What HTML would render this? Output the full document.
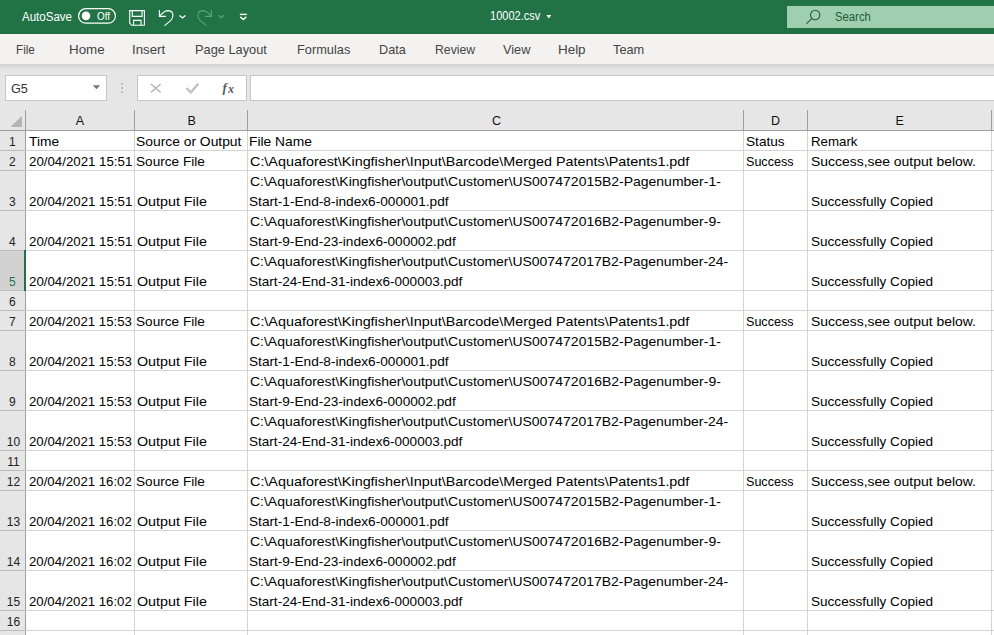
<!DOCTYPE html>
<html><head><meta charset="utf-8"><style>
html,body{margin:0;padding:0;}
body{width:994px;height:635px;overflow:hidden;position:relative;background:#fff;font-family:"Liberation Sans", sans-serif;}
.t{position:absolute;white-space:pre;line-height:normal;transform-origin:0 0;}
.abs{position:absolute;}
</style></head><body>
<div class="abs" style="left:0;top:0;width:994px;height:34px;background:#217346"></div>
<div class="abs" style="left:0;top:34px;width:994px;height:30px;background:#f3f2f1"></div>
<div class="abs" style="left:0;top:64px;width:994px;height:66px;background:#e6e6e6"></div>
<div class="abs" style="left:0;top:64px;width:994px;height:6px;background:linear-gradient(#d2d2d2,#e6e6e6)"></div>
<!-- search box -->
<div class="abs" style="left:787px;top:6px;width:210px;height:22px;background:#9fcfb0"></div>
<!-- name box -->
<div class="abs" style="left:5px;top:75px;width:100px;height:24px;background:#fff;border:1px solid #c6c6c6"></div>
<div class="abs" style="left:137px;top:75px;width:108px;height:24px;background:#fff;border:1px solid #c6c6c6"></div>
<div class="abs" style="left:250px;top:75px;width:760px;height:24px;background:#fff;border:1px solid #c6c6c6"></div>
<!-- row header column -->
<div class="abs" style="left:0;top:131px;width:25px;height:504px;background:#e6e6e6"></div>
<div class="abs" style="left:0;top:250px;width:25px;height:40px;background:#d2d2d2"></div>
<div class="abs" style="left:25px;top:110px;width:1px;height:525px;background:#9e9e9e"></div>
<div class="abs" style="left:0;top:130px;width:994px;height:1px;background:#9e9e9e"></div>
<div style="position:absolute;left:25px;top:150px;width:970px;height:1px;background:#d4d4d4"></div>
<div style="position:absolute;left:0;top:150px;width:25px;height:1px;background:#bcbcbc"></div>
<div style="position:absolute;left:25px;top:170px;width:970px;height:1px;background:#d4d4d4"></div>
<div style="position:absolute;left:0;top:170px;width:25px;height:1px;background:#bcbcbc"></div>
<div style="position:absolute;left:25px;top:210px;width:970px;height:1px;background:#d4d4d4"></div>
<div style="position:absolute;left:0;top:210px;width:25px;height:1px;background:#bcbcbc"></div>
<div style="position:absolute;left:25px;top:250px;width:970px;height:1px;background:#d4d4d4"></div>
<div style="position:absolute;left:0;top:250px;width:25px;height:1px;background:#bcbcbc"></div>
<div style="position:absolute;left:25px;top:290px;width:970px;height:1px;background:#d4d4d4"></div>
<div style="position:absolute;left:0;top:290px;width:25px;height:1px;background:#bcbcbc"></div>
<div style="position:absolute;left:25px;top:310px;width:970px;height:1px;background:#d4d4d4"></div>
<div style="position:absolute;left:0;top:310px;width:25px;height:1px;background:#bcbcbc"></div>
<div style="position:absolute;left:25px;top:330px;width:970px;height:1px;background:#d4d4d4"></div>
<div style="position:absolute;left:0;top:330px;width:25px;height:1px;background:#bcbcbc"></div>
<div style="position:absolute;left:25px;top:370px;width:970px;height:1px;background:#d4d4d4"></div>
<div style="position:absolute;left:0;top:370px;width:25px;height:1px;background:#bcbcbc"></div>
<div style="position:absolute;left:25px;top:410px;width:970px;height:1px;background:#d4d4d4"></div>
<div style="position:absolute;left:0;top:410px;width:25px;height:1px;background:#bcbcbc"></div>
<div style="position:absolute;left:25px;top:450px;width:970px;height:1px;background:#d4d4d4"></div>
<div style="position:absolute;left:0;top:450px;width:25px;height:1px;background:#bcbcbc"></div>
<div style="position:absolute;left:25px;top:470px;width:970px;height:1px;background:#d4d4d4"></div>
<div style="position:absolute;left:0;top:470px;width:25px;height:1px;background:#bcbcbc"></div>
<div style="position:absolute;left:25px;top:490px;width:970px;height:1px;background:#d4d4d4"></div>
<div style="position:absolute;left:0;top:490px;width:25px;height:1px;background:#bcbcbc"></div>
<div style="position:absolute;left:25px;top:530px;width:970px;height:1px;background:#d4d4d4"></div>
<div style="position:absolute;left:0;top:530px;width:25px;height:1px;background:#bcbcbc"></div>
<div style="position:absolute;left:25px;top:570px;width:970px;height:1px;background:#d4d4d4"></div>
<div style="position:absolute;left:0;top:570px;width:25px;height:1px;background:#bcbcbc"></div>
<div style="position:absolute;left:25px;top:610px;width:970px;height:1px;background:#d4d4d4"></div>
<div style="position:absolute;left:0;top:610px;width:25px;height:1px;background:#bcbcbc"></div>
<div style="position:absolute;left:25px;top:630px;width:970px;height:1px;background:#d4d4d4"></div>
<div style="position:absolute;left:0;top:630px;width:25px;height:1px;background:#bcbcbc"></div>
<div style="position:absolute;left:134px;top:131px;width:1px;height:504px;background:#d4d4d4"></div>
<div style="position:absolute;left:134px;top:110px;width:1px;height:20px;background:#9e9e9e"></div>
<div style="position:absolute;left:247px;top:131px;width:1px;height:504px;background:#d4d4d4"></div>
<div style="position:absolute;left:247px;top:110px;width:1px;height:20px;background:#9e9e9e"></div>
<div style="position:absolute;left:743px;top:131px;width:1px;height:504px;background:#d4d4d4"></div>
<div style="position:absolute;left:743px;top:110px;width:1px;height:20px;background:#9e9e9e"></div>
<div style="position:absolute;left:807px;top:131px;width:1px;height:504px;background:#d4d4d4"></div>
<div style="position:absolute;left:807px;top:110px;width:1px;height:20px;background:#9e9e9e"></div>
<div style="position:absolute;left:991px;top:131px;width:1px;height:504px;background:#d4d4d4"></div>
<div style="position:absolute;left:991px;top:110px;width:1px;height:20px;background:#9e9e9e"></div>
<div class="abs" style="left:24px;top:250px;width:2px;height:41px;background:#217346"></div>
<svg class="abs" style="left:0;top:0" width="994" height="635">
 <polygon points="10.5,127 22,127 22,115.7" fill="#b4b4b4"/>
 <!-- toggle -->
 <rect x="78.6" y="8.6" width="36.8" height="14.6" rx="7.3" fill="none" stroke="#fff" stroke-width="1.2"/>
 <circle cx="86" cy="15.9" r="4.3" fill="#fff"/>
 <!-- save -->
 <g fill="none" stroke="#fff" stroke-width="1.1">
  <path d="M129.7,10.6 H144.4 V25.3 H131.8 L129.7,23.2 Z"/>
  <path d="M132.3,10.6 V16.4 H142 V10.6"/>
  <path d="M133.6,25.3 V20.4 H141 V25.3"/>
 </g>
 <!-- undo -->
 <g fill="none" stroke="#fff" stroke-width="1.1">
  <path d="M159.4,10 V16.4 H165.8"/>
  <path d="M159.8,16 Q164,10.6 168.3,10.6 Q172.9,10.9 172.9,15.6 Q172.9,18.2 170.8,20.3 L164.4,25.8"/>
  <path d="M179.6,15.4 L182.5,18 L185.4,15.4" stroke-width="1.3"/>
 </g>
 <!-- redo -->
 <g fill="none" stroke="#5aa47c" stroke-width="1.1">
  <path d="M211.4,10 V16.4 H205"/>
  <path d="M211,16 Q206.8,10.6 202.5,10.6 Q197.9,10.9 197.9,15.6 Q197.9,18.2 200,20.3 L206.4,25.6"/>
  <path d="M218.6,15.2 L221.2,17.6 L223.8,15.2" stroke-width="1.2"/>
 </g>
 <!-- customize -->
 <g fill="none" stroke="#fff" stroke-width="1.4">
  <path d="M239.8,14.4 H246.8"/>
  <path d="M240.3,16.9 L243.3,19.5 L246.3,16.9"/>
 </g>
 <!-- filename triangle -->
 <polygon points="546.3,15 551.3,15 548.8,18.4" fill="#fff"/>
 <!-- magnifier -->
 <g fill="none" stroke="#1d5e37" stroke-width="1.1">
  <circle cx="815.2" cy="15" r="4.7"/>
  <path d="M811.8,18.6 L806.5,23.6"/>
 </g>
 <!-- name box dropdown -->
 <polygon points="92.8,85.3 100.2,85.3 96.5,89.2" fill="#777"/>
 <!-- dots -->
 <g fill="#a6a6a6"><rect x="121.3" y="83" width="1.6" height="1.6"/><rect x="121.3" y="87.2" width="1.6" height="1.6"/><rect x="121.3" y="91.4" width="1.6" height="1.6"/></g>
 <!-- X -->
 <path d="M150.8,84 L160.6,92.4 M160.6,84 L150.8,92.4" stroke="#b8b8b8" stroke-width="1.6" fill="none"/>
 <!-- check -->
 <path d="M186.4,88.2 L190.8,92.4 L198.4,83.6" stroke="#c4c4c4" stroke-width="2.4" fill="none"/>

</svg>
<span class="t" style="left:21.53px;top:9.69px;font-size:12.5px;color:#fff; transform:scaleX(0.9227);">AutoSave</span>
<span class="t" style="left:96.77px;top:10.04px;font-size:11px;color:#fff; transform:scaleX(0.9000);">Off</span>
<span class="t" style="left:489.65px;top:8.74px;font-size:12px;color:#fff; transform:scaleX(0.9181);">10002.csv</span>
<span class="t" style="left:835.29px;top:9.99px;font-size:12.5px;color:#1d5e37; transform:scaleX(0.9046);">Search</span>
<span class="t" style="left:16.47px;top:42.23px;font-size:13px;color:#444; transform:scaleX(0.9004);">File</span>
<span class="t" style="left:68.65px;top:42.23px;font-size:13px;color:#444; transform:scaleX(1.0282);">Home</span>
<span class="t" style="left:132.17px;top:42.23px;font-size:13px;color:#444; transform:scaleX(1.0195);">Insert</span>
<span class="t" style="left:195.12px;top:42.23px;font-size:13px;color:#444; transform:scaleX(0.9835);">Page Layout</span>
<span class="t" style="left:297.22px;top:42.23px;font-size:13px;color:#444; transform:scaleX(0.9840);">Formulas</span>
<span class="t" style="left:378.92px;top:42.23px;font-size:13px;color:#444; transform:scaleX(0.9734);">Data</span>
<span class="t" style="left:434.68px;top:42.23px;font-size:13px;color:#444; transform:scaleX(0.9423);">Review</span>
<span class="t" style="left:502.90px;top:42.23px;font-size:13px;color:#444; transform:scaleX(0.9821);">View</span>
<span class="t" style="left:557.94px;top:42.23px;font-size:13px;color:#444; transform:scaleX(1.0317);">Help</span>
<span class="t" style="left:613.38px;top:42.23px;font-size:13px;color:#444; transform:scaleX(0.9838);">Team</span>
<span class="t" style="left:11.25px;top:81.84px;font-size:12px;color:#333; transform:scaleX(1.0493);">G5</span>
<span class="t" style="left:28.66px;top:134.04px;font-size:13px;color:#000; transform:scaleX(1.0589);">Time</span>
<span class="t" style="left:136.35px;top:134.04px;font-size:13px;color:#000; transform:scaleX(1.0648);">Source or Output</span>
<span class="t" style="left:249.15px;top:134.04px;font-size:13px;color:#000; transform:scaleX(1.0628);">File Name</span>
<span class="t" style="left:745.75px;top:134.04px;font-size:13px;color:#000; transform:scaleX(1.0494);">Status</span>
<span class="t" style="left:810.56px;top:134.04px;font-size:13px;color:#000; transform:scaleX(1.0204);">Remark</span>
<span class="t" style="left:28.66px;top:153.83px;font-size:13px;color:#000; transform:scaleX(1.0208);">20/04/2021 15:51</span>
<span class="t" style="left:136.38px;top:153.83px;font-size:13px;color:#000; transform:scaleX(1.0465);">Source File</span>
<span class="t" style="left:249.93px;top:153.83px;font-size:13px;color:#000; transform:scaleX(1.1054);">C:\Aquaforest\Kingfisher\Input\Barcode\Merged Patents\Patents1.pdf</span>
<span class="t" style="left:745.85px;top:153.83px;font-size:13px;color:#000; transform:scaleX(0.9660);">Success</span>
<span class="t" style="left:810.66px;top:153.83px;font-size:13px;color:#000; transform:scaleX(1.0718);">Success,see output below.</span>
<span class="t" style="left:28.66px;top:193.83px;font-size:13px;color:#000; transform:scaleX(1.0208);">20/04/2021 15:51</span>
<span class="t" style="left:136.94px;top:193.83px;font-size:13px;color:#000; transform:scaleX(1.0990);">Output File</span>
<span class="t" style="left:249.81px;top:173.83px;font-size:13px;color:#000; transform:scaleX(1.0751);">C:\Aquaforest\Kingfisher\output\Customer\US007472015B2-Pagenumber-1-</span>
<span class="t" style="left:249.45px;top:193.83px;font-size:13px;color:#000; transform:scaleX(1.0500);">Start-1-End-8-index6-000001.pdf</span>
<span class="t" style="left:810.67px;top:193.83px;font-size:13px;color:#000; transform:scaleX(1.0430);">Successfully Copied</span>
<span class="t" style="left:28.66px;top:233.83px;font-size:13px;color:#000; transform:scaleX(1.0208);">20/04/2021 15:51</span>
<span class="t" style="left:136.94px;top:233.83px;font-size:13px;color:#000; transform:scaleX(1.0990);">Output File</span>
<span class="t" style="left:249.81px;top:213.83px;font-size:13px;color:#000; transform:scaleX(1.0751);">C:\Aquaforest\Kingfisher\output\Customer\US007472016B2-Pagenumber-9-</span>
<span class="t" style="left:249.45px;top:233.83px;font-size:13px;color:#000; transform:scaleX(1.0475);">Start-9-End-23-index6-000002.pdf</span>
<span class="t" style="left:810.67px;top:233.83px;font-size:13px;color:#000; transform:scaleX(1.0430);">Successfully Copied</span>
<span class="t" style="left:28.66px;top:273.84px;font-size:13px;color:#000; transform:scaleX(1.0208);">20/04/2021 15:51</span>
<span class="t" style="left:136.94px;top:273.84px;font-size:13px;color:#000; transform:scaleX(1.0990);">Output File</span>
<span class="t" style="left:249.79px;top:253.84px;font-size:13px;color:#000; transform:scaleX(1.0744);">C:\Aquaforest\Kingfisher\output\Customer\US007472017B2-Pagenumber-24-</span>
<span class="t" style="left:249.46px;top:273.84px;font-size:13px;color:#000; transform:scaleX(1.0433);">Start-24-End-31-index6-000003.pdf</span>
<span class="t" style="left:810.67px;top:273.84px;font-size:13px;color:#000; transform:scaleX(1.0430);">Successfully Copied</span>
<span class="t" style="left:28.64px;top:313.84px;font-size:13px;color:#000; transform:scaleX(1.0172);">20/04/2021 15:53</span>
<span class="t" style="left:136.38px;top:313.84px;font-size:13px;color:#000; transform:scaleX(1.0465);">Source File</span>
<span class="t" style="left:249.93px;top:313.84px;font-size:13px;color:#000; transform:scaleX(1.1054);">C:\Aquaforest\Kingfisher\Input\Barcode\Merged Patents\Patents1.pdf</span>
<span class="t" style="left:745.85px;top:313.84px;font-size:13px;color:#000; transform:scaleX(0.9660);">Success</span>
<span class="t" style="left:810.66px;top:313.84px;font-size:13px;color:#000; transform:scaleX(1.0718);">Success,see output below.</span>
<span class="t" style="left:28.64px;top:353.84px;font-size:13px;color:#000; transform:scaleX(1.0172);">20/04/2021 15:53</span>
<span class="t" style="left:136.94px;top:353.84px;font-size:13px;color:#000; transform:scaleX(1.0990);">Output File</span>
<span class="t" style="left:249.81px;top:333.84px;font-size:13px;color:#000; transform:scaleX(1.0751);">C:\Aquaforest\Kingfisher\output\Customer\US007472015B2-Pagenumber-1-</span>
<span class="t" style="left:249.45px;top:353.84px;font-size:13px;color:#000; transform:scaleX(1.0500);">Start-1-End-8-index6-000001.pdf</span>
<span class="t" style="left:810.67px;top:353.84px;font-size:13px;color:#000; transform:scaleX(1.0430);">Successfully Copied</span>
<span class="t" style="left:28.64px;top:393.84px;font-size:13px;color:#000; transform:scaleX(1.0172);">20/04/2021 15:53</span>
<span class="t" style="left:136.94px;top:393.84px;font-size:13px;color:#000; transform:scaleX(1.0990);">Output File</span>
<span class="t" style="left:249.81px;top:373.84px;font-size:13px;color:#000; transform:scaleX(1.0751);">C:\Aquaforest\Kingfisher\output\Customer\US007472016B2-Pagenumber-9-</span>
<span class="t" style="left:249.45px;top:393.84px;font-size:13px;color:#000; transform:scaleX(1.0475);">Start-9-End-23-index6-000002.pdf</span>
<span class="t" style="left:810.67px;top:393.84px;font-size:13px;color:#000; transform:scaleX(1.0430);">Successfully Copied</span>
<span class="t" style="left:28.64px;top:433.84px;font-size:13px;color:#000; transform:scaleX(1.0172);">20/04/2021 15:53</span>
<span class="t" style="left:136.94px;top:433.84px;font-size:13px;color:#000; transform:scaleX(1.0990);">Output File</span>
<span class="t" style="left:249.79px;top:413.84px;font-size:13px;color:#000; transform:scaleX(1.0744);">C:\Aquaforest\Kingfisher\output\Customer\US007472017B2-Pagenumber-24-</span>
<span class="t" style="left:249.46px;top:433.84px;font-size:13px;color:#000; transform:scaleX(1.0433);">Start-24-End-31-index6-000003.pdf</span>
<span class="t" style="left:810.67px;top:433.84px;font-size:13px;color:#000; transform:scaleX(1.0430);">Successfully Copied</span>
<span class="t" style="left:28.66px;top:473.84px;font-size:13px;color:#000; transform:scaleX(1.0158);">20/04/2021 16:02</span>
<span class="t" style="left:136.38px;top:473.84px;font-size:13px;color:#000; transform:scaleX(1.0465);">Source File</span>
<span class="t" style="left:249.93px;top:473.84px;font-size:13px;color:#000; transform:scaleX(1.1054);">C:\Aquaforest\Kingfisher\Input\Barcode\Merged Patents\Patents1.pdf</span>
<span class="t" style="left:745.85px;top:473.84px;font-size:13px;color:#000; transform:scaleX(0.9660);">Success</span>
<span class="t" style="left:810.66px;top:473.84px;font-size:13px;color:#000; transform:scaleX(1.0718);">Success,see output below.</span>
<span class="t" style="left:28.66px;top:513.84px;font-size:13px;color:#000; transform:scaleX(1.0158);">20/04/2021 16:02</span>
<span class="t" style="left:136.94px;top:513.84px;font-size:13px;color:#000; transform:scaleX(1.0990);">Output File</span>
<span class="t" style="left:249.81px;top:493.84px;font-size:13px;color:#000; transform:scaleX(1.0751);">C:\Aquaforest\Kingfisher\output\Customer\US007472015B2-Pagenumber-1-</span>
<span class="t" style="left:249.45px;top:513.84px;font-size:13px;color:#000; transform:scaleX(1.0500);">Start-1-End-8-index6-000001.pdf</span>
<span class="t" style="left:810.67px;top:513.84px;font-size:13px;color:#000; transform:scaleX(1.0430);">Successfully Copied</span>
<span class="t" style="left:28.66px;top:553.84px;font-size:13px;color:#000; transform:scaleX(1.0158);">20/04/2021 16:02</span>
<span class="t" style="left:136.94px;top:553.84px;font-size:13px;color:#000; transform:scaleX(1.0990);">Output File</span>
<span class="t" style="left:249.81px;top:533.84px;font-size:13px;color:#000; transform:scaleX(1.0751);">C:\Aquaforest\Kingfisher\output\Customer\US007472016B2-Pagenumber-9-</span>
<span class="t" style="left:249.45px;top:553.84px;font-size:13px;color:#000; transform:scaleX(1.0475);">Start-9-End-23-index6-000002.pdf</span>
<span class="t" style="left:810.67px;top:553.84px;font-size:13px;color:#000; transform:scaleX(1.0430);">Successfully Copied</span>
<span class="t" style="left:28.66px;top:593.84px;font-size:13px;color:#000; transform:scaleX(1.0158);">20/04/2021 16:02</span>
<span class="t" style="left:136.94px;top:593.84px;font-size:13px;color:#000; transform:scaleX(1.0990);">Output File</span>
<span class="t" style="left:249.79px;top:573.84px;font-size:13px;color:#000; transform:scaleX(1.0744);">C:\Aquaforest\Kingfisher\output\Customer\US007472017B2-Pagenumber-24-</span>
<span class="t" style="left:249.46px;top:593.84px;font-size:13px;color:#000; transform:scaleX(1.0433);">Start-24-End-31-index6-000003.pdf</span>
<span class="t" style="left:810.67px;top:593.84px;font-size:13px;color:#000; transform:scaleX(1.0430);">Successfully Copied</span>
<span class="t" style="left:75.70px;top:113.89px;font-size:12.5px;color:#111;">A</span>
<span class="t" style="left:187.60px;top:113.89px;font-size:12.5px;color:#111;">B</span>
<span class="t" style="left:492.00px;top:113.89px;font-size:12.5px;color:#111;">C</span>
<span class="t" style="left:771.10px;top:113.89px;font-size:12.5px;color:#111;">D</span>
<span class="t" style="left:895.60px;top:113.89px;font-size:12.5px;color:#111;">E</span>
<span class="t" style="left:9.00px;top:134.84px;font-size:12px;color:#222;">1</span>
<span class="t" style="left:9.00px;top:154.84px;font-size:12px;color:#222;">2</span>
<span class="t" style="left:9.00px;top:194.84px;font-size:12px;color:#222;">3</span>
<span class="t" style="left:9.00px;top:234.84px;font-size:12px;color:#222;">4</span>
<span class="t" style="left:9.00px;top:274.84px;font-size:12px;color:#217346;">5</span>
<span class="t" style="left:9.00px;top:294.84px;font-size:12px;color:#222;">6</span>
<span class="t" style="left:9.00px;top:314.84px;font-size:12px;color:#222;">7</span>
<span class="t" style="left:9.00px;top:354.84px;font-size:12px;color:#222;">8</span>
<span class="t" style="left:9.00px;top:394.84px;font-size:12px;color:#222;">9</span>
<span class="t" style="left:6.76px;top:434.84px;font-size:12px;color:#222;">10</span>
<span class="t" style="left:7.21px;top:454.84px;font-size:12px;color:#222;">11</span>
<span class="t" style="left:6.76px;top:474.84px;font-size:12px;color:#222;">12</span>
<span class="t" style="left:6.76px;top:514.84px;font-size:12px;color:#222;">13</span>
<span class="t" style="left:6.76px;top:554.84px;font-size:12px;color:#222;">14</span>
<span class="t" style="left:6.76px;top:594.84px;font-size:12px;color:#222;">15</span>
<span class="t" style="left:6.76px;top:614.84px;font-size:12px;color:#222;">16</span>
<span class="t" style="left:222.5px;top:79.5px;font-family:'Liberation Serif',serif;font-style:italic;font-weight:bold;font-size:13px;color:#5a5a5a">f</span><span class="t" style="left:228px;top:81.8px;font-family:'Liberation Serif',serif;font-style:italic;font-weight:bold;font-size:12px;color:#5a5a5a">x</span>
</body></html>
